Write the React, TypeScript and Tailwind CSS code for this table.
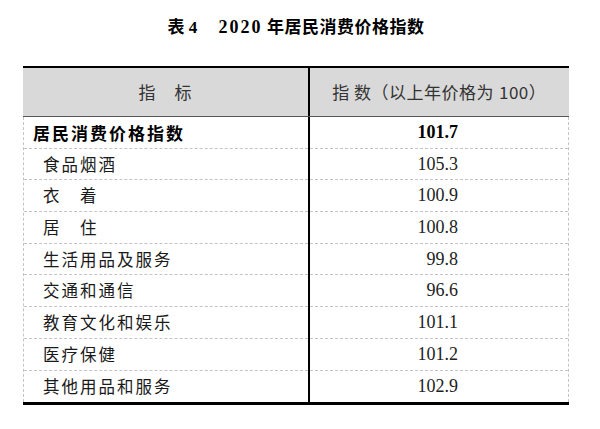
const rows = [
  { name: '食品烟酒', value: '105.3' },
  { name: '衣　着', value: '100.9' },
  { name: '居　住', value: '100.8' },
  { name: '生活用品及服务', value: '99.8' },
  { name: '交通和通信', value: '96.6' },
  { name: '教育文化和娱乐', value: '101.1' },
  { name: '医疗保健', value: '101.2' },
  { name: '其他用品和服务', value: '102.9' },
];

const cjk = "font-['Noto_Sans_CJK_SC',sans-serif]";
const num = "font-['Liberation_Serif','Noto_Sans_CJK_SC',serif]";

export default function App() {
  return (
    <div className="w-[600px] h-[429px] bg-white text-[#1a1a1a]">
      <div className="ml-[23px] w-[546px]">
        {/* Title */}
        <h1 className="h-[66px] pt-[16px] text-center text-[17px] leading-[20px] font-bold text-black">
          <span className={cjk}>表</span>
          <span className={num}> 4　 </span>
          <span className={`${num} text-[18px] tracking-[2px]`}>2020</span>
          <span className={`${cjk} tracking-[0.5px]`}> 年居民消费价格指数</span>
        </h1>

        <div className="border-t-2 border-b-[3px] border-black">
          {/* Header */}
          <div className="grid grid-cols-[285px_1.5px_1fr] h-[49px] bg-[#d9d9d9] border-b border-[#555] text-[#333]">
            <div className={`${cjk} flex items-center justify-center text-[17px] tracking-[1px]`}>
              指　标
            </div>
            <div className="bg-black" />
            <div className={`${cjk} flex items-center justify-center text-[17px] tracking-[0.5px]`}>
              指 数（以上年价格为<span className="ml-[5px]">100</span>）
            </div>
          </div>

          {/* Body */}
          <div className="grid grid-cols-[284px_1.5px_1fr] border-x border-dashed border-[#c4c4c4]">
            <div className={`${cjk} flex items-center h-[31.7px] pl-[9px] border-b border-dashed border-[#c4c4c4] text-[17px] font-bold tracking-[2px] text-black`}>
              居民消费价格指数
            </div>
            <div className="bg-black" />
            <div className={`${num} flex items-center justify-end h-[31.7px] pr-[110px] border-b border-dashed border-[#c4c4c4] text-[18px] font-bold text-black`}>
              101.7
            </div>
            {rows.map((row, i) => {
              const line = i < rows.length - 1 ? 'border-b border-dashed border-[#c4c4c4]' : '';
              return [
                <div
                  key={row.name}
                  className={`${cjk} flex items-center h-[31.7px] pl-[19px] ${line} text-[16.5px] tracking-[2px]`}
                >
                  {row.name}
                </div>,
                <div key={row.name + '-sep'} className="bg-black" />,
                <div
                  key={row.name + '-v'}
                  className={`${num} flex items-center justify-end h-[31.7px] pr-[110px] ${line} text-[18px] text-[#222]`}
                >
                  {row.value}
                </div>,
              ];
            })}
          </div>
        </div>
      </div>
    </div>
  );
}
